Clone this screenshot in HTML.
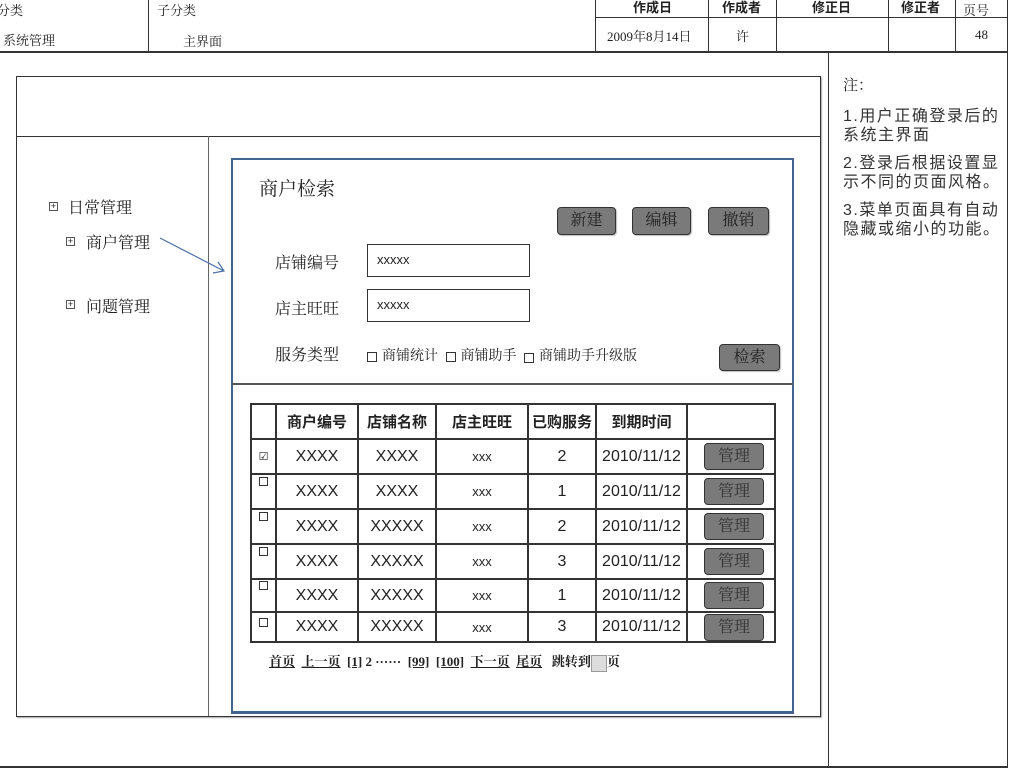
<!DOCTYPE html>
<html><head><meta charset="utf-8"><style>
*{margin:0;padding:0;box-sizing:border-box}
body{width:1024px;height:768px;background:#fff;position:relative;overflow:hidden;font-family:"Liberation Serif","Noto Serif CJK SC",serif;color:#222}
.a{position:absolute}
.hl{position:absolute;height:1px;background:#333}
.vl{position:absolute;width:1px;background:#333}
.t{position:absolute;white-space:nowrap}
.btn{position:absolute;background:#7a7a7a;border:1px solid #333;border-radius:4px;color:#222;font-size:16px;text-align:center;line-height:26px;box-shadow:1px 1px 1px #bbb}
.inp{position:absolute;border:1px solid #333;background:#fff;font-family:"Liberation Sans",sans-serif;font-size:13px;padding-left:9px;line-height:30px}
.sans{font-family:"Liberation Sans","Noto Sans CJK SC",sans-serif}
table{position:absolute;left:250px;top:403px;border-collapse:collapse;font-family:"Liberation Sans","Noto Sans CJK SC",sans-serif}
td{border:2px solid #333;text-align:center;font-size:16px;padding:0}
.cb{display:inline-block;width:9px;height:9px;border:1px solid #333;vertical-align:top;margin-top:-6px}
.mg{display:inline-block;width:60px;height:27px;background:#7a7a7a;border:1px solid #333;border-radius:4px;font-family:"Liberation Serif","Noto Serif CJK SC",serif;font-size:16px;line-height:25px;margin-left:16px;text-align:center;color:#333}
.chk{display:inline-block;width:10px;height:10px;border:1px solid #333;margin-right:5px;vertical-align:middle}
.pm{position:absolute;width:9px;height:9px;border:1px solid #555;font-size:9px;line-height:7px;text-align:center;font-family:"Liberation Sans",sans-serif}
</style></head><body>
<div class="hl" style="left:595px;top:17px;width:413px"></div>
<div class="hl" style="left:0;top:51px;width:1008px;height:2px"></div>
<div class="vl" style="left:148px;top:0;height:52px"></div>
<div class="vl" style="left:595px;top:0;height:52px"></div>
<div class="vl" style="left:708px;top:0;height:52px"></div>
<div class="vl" style="left:776px;top:0;height:52px"></div>
<div class="vl" style="left:888px;top:0;height:52px"></div>
<div class="vl" style="left:955px;top:0;height:52px"></div>
<div class="vl" style="left:1007px;top:0;height:768px"></div>
<div class="t" style="left:-3px;top:0;font-size:13px">分类</div>
<div class="t" style="left:157px;top:0;font-size:13px">子分类</div>
<div class="t sans" style="left:633px;top:0;font-size:13px;line-height:16px;font-weight:bold">作成日</div>
<div class="t sans" style="left:722px;top:0;font-size:13px;line-height:16px;font-weight:bold">作成者</div>
<div class="t sans" style="left:812px;top:0;font-size:13px;line-height:16px;font-weight:bold">修正日</div>
<div class="t sans" style="left:901px;top:0;font-size:13px;line-height:16px;font-weight:bold">修正者</div>
<div class="t" style="left:963px;top:0;font-size:13px">页号</div>
<div class="t" style="left:3px;top:30px;font-size:13px">系统管理</div>
<div class="t" style="left:183px;top:31px;font-size:13px">主界面</div>
<div class="t" style="left:607px;top:26px;font-size:13px">2009年8月14日</div>
<div class="t" style="left:736px;top:26px;font-size:13px">许</div>
<div class="t" style="left:975px;top:27px;font-size:13px">48</div>
<div class="vl" style="left:828px;top:52px;height:716px"></div>
<div class="hl" style="left:0;top:766px;width:1008px;height:2px"></div>
<div class="t" style="left:843px;top:77px;font-size:15px;line-height:19px">注：</div>
<div class="a" style="left:843px;top:107px;width:180px;font-size:16px;line-height:19px;letter-spacing:1.5px;font-family:'Liberation Sans','Noto Sans CJK SC',sans-serif;color:#333;white-space:nowrap">1.用户正确登录后的<br>系统主界面<div style="height:9px"></div>2.登录后根据设置显<br>示不同的页面风格。<div style="height:9px"></div>3.菜单页面具有自动<br>隐藏或缩小的功能。</div>
<div class="a" style="left:16px;top:76px;width:805px;height:641px;border:1px solid #333;box-shadow:1px 1px 1px #aaa"></div>
<div class="hl" style="left:16px;top:136px;width:805px"></div>
<div class="vl" style="left:208px;top:136px;height:580px;background:#666"></div>
<div class="pm" style="left:49px;top:202px">+</div>
<div class="t" style="left:68px;top:195px;font-size:16px">日常管理</div>
<div class="pm" style="left:66px;top:237px">+</div>
<div class="t" style="left:86px;top:230px;font-size:16px">商户管理</div>
<div class="pm" style="left:66px;top:300px">+</div>
<div class="t" style="left:86px;top:294px;font-size:16px">问题管理</div>
<svg class="a" style="left:0;top:0" width="300" height="300"><path d="M160 238 L224 271 M213 273 L224 271 L218 262" stroke="#4a6fa5" stroke-width="1.2" fill="none"/></svg>
<div class="a" style="left:231px;top:158px;width:563px;height:556px;border:2px solid #42658f;border-bottom-width:3px"></div>
<div class="hl" style="left:232px;top:383px;width:561px;height:2px;background:#555"></div>
<div class="t" style="left:259px;top:174px;font-size:19px">商户检索</div>
<div class="btn" style="left:557px;top:207px;width:59px;height:28px">新建</div>
<div class="btn" style="left:632px;top:207px;width:59px;height:28px">编辑</div>
<div class="btn" style="left:708px;top:207px;width:61px;height:28px">撤销</div>
<div class="t" style="left:275px;top:250px;font-size:16px">店铺编号</div>
<div class="inp" style="left:367px;top:244px;width:163px;height:33px">xxxxx</div>
<div class="t" style="left:275px;top:296px;font-size:16px">店主旺旺</div>
<div class="inp" style="left:367px;top:289px;width:163px;height:33px">xxxxx</div>
<div class="t" style="left:275px;top:342px;font-size:16px">服务类型</div>
<div class="t" style="left:367px;top:345px;font-size:14px"><span class="chk"></span>商铺统计 <span class="chk" style="margin-left:4px"></span>商铺助手 <span class="chk" style="margin-left:4px;margin-top:3px"></span>商铺助手升级版</div>
<div class="btn" style="left:719px;top:344px;width:61px;height:27px">检索</div>
<table>
<tr style="height:35px"><td style="width:25px"></td><td style="width:82px;font-weight:bold;font-size:15px">商户编号</td><td style="width:78px;font-weight:bold;font-size:15px">店铺名称</td><td style="width:92px;font-weight:bold;font-size:15px">店主旺旺</td><td style="width:68px;font-weight:bold;font-size:15px">已购服务</td><td style="width:91px;font-weight:bold;font-size:15px">到期时间</td><td style="width:88px"></td></tr>
<tr style="height:35px"><td style="font-size:11px">☑</td><td>XXXX</td><td>XXXX</td><td style="font-size:13px">xxx</td><td>2</td><td>2010/11/12</td><td style="text-align:left"><span class="mg">管理</span></td></tr>
<tr style="height:35px"><td><span class="cb"></span></td><td>XXXX</td><td>XXXX</td><td style="font-size:13px">xxx</td><td>1</td><td>2010/11/12</td><td style="text-align:left"><span class="mg">管理</span></td></tr>
<tr style="height:35px"><td><span class="cb"></span></td><td>XXXX</td><td>XXXXX</td><td style="font-size:13px">xxx</td><td>2</td><td>2010/11/12</td><td style="text-align:left"><span class="mg">管理</span></td></tr>
<tr style="height:35px"><td><span class="cb"></span></td><td>XXXX</td><td>XXXXX</td><td style="font-size:13px">xxx</td><td>3</td><td>2010/11/12</td><td style="text-align:left"><span class="mg">管理</span></td></tr>
<tr style="height:33px"><td><span class="cb"></span></td><td>XXXX</td><td>XXXXX</td><td style="font-size:13px">xxx</td><td>1</td><td>2010/11/12</td><td style="text-align:left"><span class="mg">管理</span></td></tr>
<tr style="height:30px"><td><span class="cb" style="margin-top:0"></span></td><td>XXXX</td><td>XXXXX</td><td style="font-size:13px">xxx</td><td>3</td><td>2010/11/12</td><td style="text-align:left"><span class="mg">管理</span></td></tr>
</table>
<div class="t" style="left:269px;top:651px;font-size:13px;font-weight:bold"><u>首页</u>&nbsp; <u>上一页</u>&nbsp; <u>[1]</u> 2 ······ &nbsp;<u>[99]</u>&nbsp; <u>[100]</u>&nbsp; <u>下一页</u>&nbsp; <u>尾页</u> &nbsp;&nbsp;跳转到<span style="display:inline-block;width:16px;height:17px;background:#ddd;border:1px solid #999;vertical-align:middle"></span>页</div>
</body></html>
